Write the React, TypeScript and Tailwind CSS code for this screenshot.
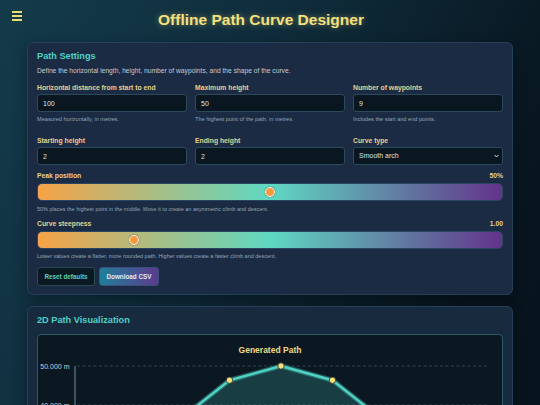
import React from 'react';

type Field = { label: string; value: string; help?: string; select?: boolean };

const topFields: Field[] = [
  { label: 'Horizontal distance from start to end', value: '100', help: 'Measured horizontally, in metres.' },
  { label: 'Maximum height', value: '50', help: 'The highest point of the path, in metres.' },
  { label: 'Number of waypoints', value: '9', help: 'Includes the start and end points.' },
];

const bottomFields: Field[] = [
  { label: 'Starting height', value: '2' },
  { label: 'Ending height', value: '2' },
  { label: 'Curve type', value: 'Smooth arch', select: true },
];

const FieldBox: React.FC<{ field: Field }> = ({ field }) => (
  <div>
    <label className="block text-[6.8px] font-bold leading-[9px] text-[#e6d08c]">{field.label}</label>
    {field.select ? (
      <div className="mt-[2.5px] flex h-[18px] items-center justify-between rounded-[3px] border border-[#2b4b5c] bg-[#0a1620] pl-[5px] pr-[3px] text-[7px] text-[#dfe5ea]">
        <span>{field.value}</span>
        <svg width="5" height="4" viewBox="0 0 10 8">
          <path d="M1.5 2 L5 6 L8.5 2" fill="none" stroke="#cfd6de" strokeWidth="2" />
        </svg>
      </div>
    ) : (
      <input
        defaultValue={field.value}
        className="mt-[2.5px] block h-[18px] w-full rounded-[3px] border border-[#2b4b5c] bg-[#0a1620] px-[5px] text-[7px] text-[#dfe5ea] outline-none"
      />
    )}
    {field.help && <p className="mt-[3px] text-[5.6px] leading-[8px] text-[#97a5b5]">{field.help}</p>}
  </div>
);

const Slider: React.FC<{ label: string; display: string; frac: number; help: string }> = ({ label, display, frac, help }) => (
  <div className="mt-[6px]">
    <div className="flex justify-between text-[6.8px] font-bold leading-[9px] text-[#e6d08c]">
      <span>{label}</span>
      <span>{display}</span>
    </div>
    <div className="relative mt-[3px] h-[18px] rounded-[5px] border border-[#2b4663] bg-[linear-gradient(90deg,#f6a247_0%,#5fd8c2_50%,#63338a_100%)]">
      <span
        className="absolute top-1/2 h-[10px] w-[10px] -translate-x-1/2 -translate-y-1/2 rounded-full border-[1.2px] border-[#fff4e4] bg-[#f8983d] shadow-[0_0_2px_rgba(0,0,0,0.4)]"
        style={{ left: `calc(5px + ${frac} * (100% - 10px))` }}
      />
    </div>
    <p className="mt-[3.7px] text-[5.5px] leading-[8px] text-[#97a5b5]">{help}</p>
  </div>
);

// smooth arch: 9 waypoints over 100 m, 2 -> 50 -> 2
const waypoints = Array.from({ length: 9 }, (_, i) => {
  const t = i / 8;
  return { x: 100 * t, h: 2 + 48 * Math.sin(Math.PI * t) };
});

const sx = (m: number) => 37 + m * 4.12;
const sy = (h: number) => 31 + (50 - h) * 3.9;

const PathChart: React.FC = () => {
  const pts = waypoints.map((p) => `${sx(p.x)},${sy(p.h)}`).join(' ');
  const area = `${sx(0)},${sy(0)} ${pts} ${sx(100)},${sy(0)}`;
  const ticks = [50, 40, 30, 20, 10, 0];

  return (
    <svg width="100%" height="250" viewBox="0 0 464 250" className="block">
      <text x="232" y="17.8" textAnchor="middle" fontSize="8.5" fontWeight="bold" fill="#f0da86">
        Generated Path
      </text>
      {ticks.map((t) => (
        <g key={t}>
          <line x1="39" x2="449" y1={sy(t)} y2={sy(t)} stroke="#34505e" strokeWidth="0.8" strokeDasharray="3 2.5" />
          <text x="31.5" y={sy(t) + 2.5} textAnchor="end" fontSize="7" fill="#c6ced8">
            {t.toFixed(3)} m
          </text>
        </g>
      ))}
      <line x1="37" x2="37" y1="31" y2={sy(0)} stroke="#6f909e" strokeWidth="1" />
      <polygon points={area} fill="rgba(79,209,197,0.2)" />
      <polyline points={pts} fill="none" stroke="rgba(79,209,197,0.35)" strokeWidth="5" strokeLinejoin="round" />
      <polyline points={pts} fill="none" stroke="#4fd3c3" strokeWidth="2.4" strokeLinejoin="round" />
      {waypoints.map((p, i) => (
        <circle key={i} cx={sx(p.x)} cy={sy(p.h)} r="3.2" fill="#f5df7a" stroke="#1d2b2a" strokeWidth="0.8" />
      ))}
    </svg>
  );
};

const App: React.FC = () => {
  return (
    <div className="min-h-screen w-full bg-[linear-gradient(115deg,#143b4b_0%,#0f2b3a_38%,#08161f_72%,#07111a_100%)] pb-6 font-['Liberation_Sans',Arial,sans-serif]">
      <header className="relative h-[41.5px]">
        <button className="absolute left-[12px] top-[11px] flex flex-col gap-[2.4px]">
          <span className="block h-[1.7px] w-[10px] bg-[#e9dc72]" />
          <span className="block h-[1.7px] w-[10px] bg-[#e9dc72]" />
          <span className="block h-[1.7px] w-[10px] bg-[#e9dc72]" />
        </button>
        <h1 className="pr-[18px] pt-[10px] text-center text-[15.5px] font-bold leading-[20px] text-[#f4e07e] [text-shadow:0_0_6px_rgba(246,226,124,0.45)]">
          Offline Path Curve Designer
        </h1>
      </header>

      <main className="px-[27px]">
        <section className="rounded-[6px] border border-[#26405a] bg-[#1a2b43] px-[9px] pb-[8.5px] pt-[8px] shadow-[0_4px_14px_rgba(0,0,0,0.35)]">
          <h2 className="text-[9.2px] font-bold leading-[11px] text-[#4fd1c5]">Path Settings</h2>
          <p className="mt-[5px] text-[6.7px] leading-[8px] text-[#c3ccd6]">
            Define the horizontal length, height, number of waypoints, and the shape of the curve.
          </p>

          <div className="mt-[8px] grid grid-cols-3 gap-x-[8px] gap-y-[12.5px]">
            {topFields.map((f) => (
              <FieldBox key={f.label} field={f} />
            ))}
            {bottomFields.map((f) => (
              <FieldBox key={f.label} field={f} />
            ))}
          </div>

          <Slider
            label="Peak position"
            display="50%"
            frac={0.5}
            help="50% places the highest point in the middle. Move it to create an asymmetric climb and descent."
          />
          <Slider
            label="Curve steepness"
            display="1.00"
            frac={0.2}
            help="Lower values create a flatter, more rounded path. Higher values create a faster climb and descent."
          />

          <div className="mt-[7px] flex gap-[4px]">
            <button className="h-[18.5px] rounded-[3px] border border-[#2a4a55] bg-[#0b1a22] px-[6.5px] text-[6.3px] font-bold text-[#5fd0b8]">
              Reset defaults
            </button>
            <button className="h-[18.5px] rounded-[3px] border border-[#3a4f7a] bg-[linear-gradient(90deg,#1f7f99,#5d3a8f)] px-[6.5px] text-[6.3px] font-bold text-[#e8e8f2]">
              Download CSV
            </button>
          </div>
        </section>

        <section className="mt-[10.5px] rounded-[6px] border border-[#24405a] bg-[#172a3e] px-[9px] pb-[10px] pt-[8px] shadow-[0_4px_14px_rgba(0,0,0,0.35)]">
          <h2 className="text-[9.2px] font-bold leading-[11px] text-[#4fd1c5]">2D Path Visualization</h2>
          <div className="mt-[8px] rounded-[4px] border border-[#285a64] bg-[#0b1822]">
            <PathChart />
          </div>
        </section>
      </main>
    </div>
  );
};

export default App;
